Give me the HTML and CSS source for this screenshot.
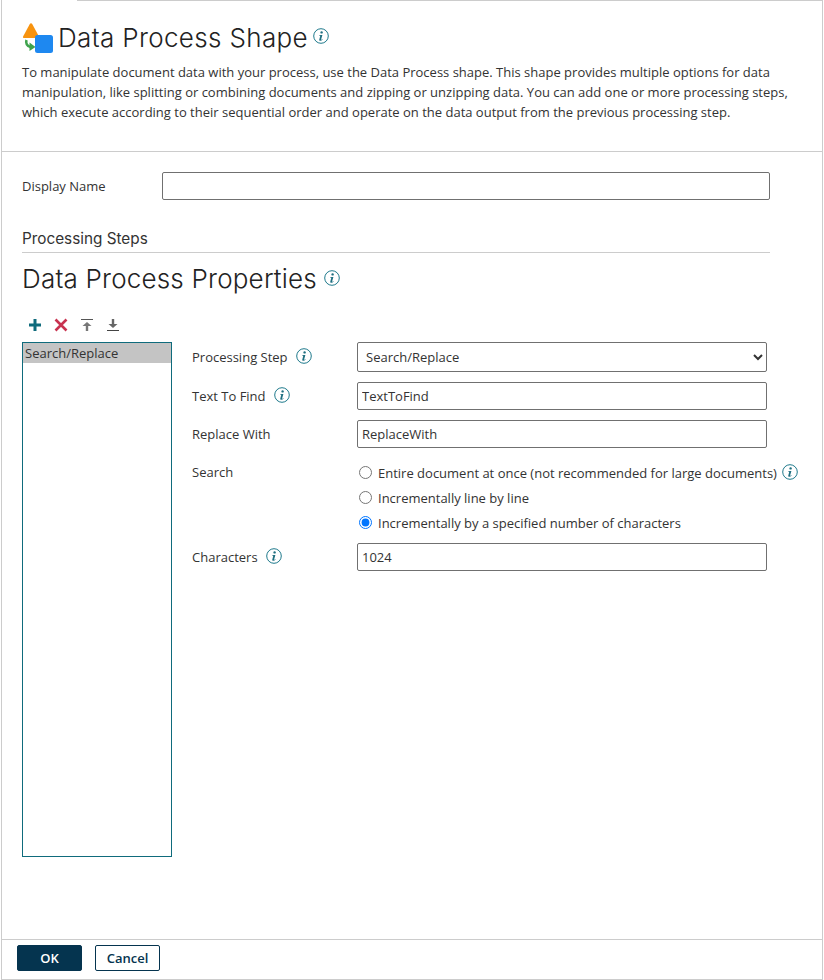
FILE: index.html
```html
<!DOCTYPE html>
<html lang="en">
<head>
    <meta charset="UTF-8">
    <meta name="viewport" content="width=device-width, initial-scale=1.0">
    <title>Data Process Shape</title>
    <link rel="stylesheet" href="styles.css">
</head>
<body>
    <svg class="icon-defs" width="0" height="0" aria-hidden="true">
        <symbol id="info" viewBox="0 0 16 16">
            <circle cx="8" cy="8" r="7.3" fill="none" stroke="#1f7a8c" stroke-width="1"/>
            <circle cx="8.6" cy="4.4" r="1.2" fill="#1f6f80"/>
            <path d="M6.4 7h3l-1.3 4.4c-.1.4.2.5.5.3l.8-.6.2.4c-.7.8-1.5 1.2-2.3 1.2-.8 0-1.2-.5-1-1.3l1-3.6h-1z" fill="#1f6f80"/>
        </symbol>
    </svg>

    <div id="dialog">
        <div class="top-line"></div>

        <div id="intro">
            <div class="title-row">
                <svg class="shape-logo" width="32" height="32" viewBox="0 0 32 32">
                    <path d="M9 1.200c.5 0 .9.300 1.200.800L17 14.500c.4.800 0 1.500-.9 1.500H2c-.9 0-1.300-.7-.9-1.500L7.800 2c.3-.5.700-.8 1.200-.8z" fill="#f7930f"/>
                    <path d="M4.500 18c-1 3 .4 6.300 4 7" fill="none" stroke="#3fa34d" stroke-width="2.600"/>
                    <path d="M7.500 20.500l6 4.500-6 4z" fill="#3fa34d"/>
                    <rect x="13" y="13" width="18" height="18" rx="2.500" fill="#1e88f0"/>
                </svg>
                <h1>Data Process Shape</h1>
                <svg class="info info-title"><use href="#info"/></svg>
            </div>
            <p>To manipulate document data with your process, use the Data Process shape. This shape provides multiple options for data manipulation, like splitting or combining documents and zipping or unzipping data. You can add one or more processing steps, which execute according to their sequential order and operate on the data output from the previous processing step.</p>
        </div>

        <div id="content">
            <div class="name-row">
                <label for="display-name">Display Name</label>
                <input type="text" id="display-name">
            </div>

            <h3>Processing Steps</h3>

            <div class="props-title">
                <h2>Data Process Properties</h2>
                <svg class="info info-title"><use href="#info"/></svg>
            </div>

            <div class="toolbar">
                <svg width="14" height="14" viewBox="0 0 14 14"><path d="M7 1v12M1 7h12" stroke="#0f6b7c" stroke-width="3"/></svg>
                <svg width="14" height="14" viewBox="0 0 14 14"><path d="M1.500 1.500l11 11M12.500 1.500l-11 11" stroke="#c8324f" stroke-width="2.600"/></svg>
                <svg width="14" height="12" viewBox="-1 0 14 12"><path d="M0 .5h12" stroke="#555" stroke-width="1"/><path d="M6 3l4.500 4H7.200v5H4.800V7H1.500z" fill="#777"/></svg>
                <svg width="14" height="12" viewBox="-1 0 14 12"><path d="M4.800 0h2.400v5h3.300L6 9 1.500 5h3.300z" fill="#666"/><path d="M0 11.500h12" stroke="#444" stroke-width="1"/></svg>
            </div>

            <div class="steps-area">
                <div id="steps-list">
                    <div class="step selected">Search/Replace</div>
                </div>

                <div id="step-form">
                    <div class="field field-first">
                        <label>Processing Step <svg class="info"><use href="#info"/></svg></label>
                        <select>
                            <option>Search/Replace</option>
                        </select>
                    </div>
                    <div class="field">
                        <label>Text To Find <svg class="info"><use href="#info"/></svg></label>
                        <input type="text" value="TextToFind">
                    </div>
                    <div class="field">
                        <label>Replace With</label>
                        <input type="text" value="ReplaceWith">
                    </div>
                    <div class="field field-radios">
                        <label>Search</label>
                        <div class="radios">
                            <div class="radio"><input type="radio" name="search"> Entire document at once (not recommended for large documents) <svg class="info"><use href="#info"/></svg></div>
                            <div class="radio"><input type="radio" name="search"> Incrementally line by line</div>
                            <div class="radio"><input type="radio" name="search" checked> Incrementally by a specified number of characters</div>
                        </div>
                    </div>
                    <div class="field">
                        <label>Characters <svg class="info"><use href="#info"/></svg></label>
                        <input type="text" value="1024">
                    </div>
                </div>
            </div>
        </div>

        <div id="footer">
            <button class="btn-ok">OK</button>
            <button class="btn-cancel">Cancel</button>
        </div>
    </div>
</body>
</html>
```

FILE: styles.css
```css
html, body {
    height: 100%;
}
body {
    font-family: "Open Sans", "Noto Sans", sans-serif;
    font-size: 13px;
    color: #333;
    margin: 0;
    padding: 0;
    background-color: #fff;
}
.icon-defs {
    display: block;
    height: 0;
}
#dialog {
    box-sizing: border-box;
    height: 980px;
    margin: 0 1px;
    border-left: 1px solid #ccc;
    border-right: 1px solid #ccc;
    border-bottom: 1px solid #ccc;
    display: flex;
    flex-direction: column;
}
.top-line {
    height: 1px;
    margin-left: 75px;
    background-color: #ccc;
}


#intro {
    height: 151px;
    box-sizing: border-box;
    border-bottom: 1px solid #ccc;
    padding: 18px 20px 0;
}
.title-row {
    display: flex;
    align-items: center;
    height: 36px;
}
.shape-logo {
    margin-right: 4px;
    margin-top: 2px;
}
h1, h2 {
    font-family: Inter, "Open Sans", sans-serif;
    font-weight: 300;
    color: #222;
    margin: 0;
}
h1 {
    font-size: 26px;
    letter-spacing: 0.35px;
}
#intro p {
    margin: 7px 0 0;
    line-height: 20px;
    font-size: 13px;
    color: #333;
}
.info {
    width: 16px;
    height: 16px;
    vertical-align: -2px;
    margin-left: 5px;
}
.info-title {
    align-self: flex-start;
    margin-top: 9px;
}


#content {
    flex: 1;
    padding: 20px 20px 0;
    min-height: 0;
}
.name-row {
    display: flex;
    align-items: center;
}
.name-row label {
    width: 140px;
}
.name-row input {
    width: 608px;
    height: 28px;
}
input[type="text"], select {
    box-sizing: border-box;
    border: 1px solid #707070;
    border-radius: 2px;
    font-family: inherit;
    font-size: 13px;
    color: #333;
    padding: 0 4px;
    margin: 0;
    background-color: #fff;
}
h3 {
    font-family: Inter, "Open Sans", sans-serif;
    font-weight: 400;
    font-size: 15.300px;
    color: #333;
    margin: 29px 0 0;
    width: 748px;
    height: 23px;
    line-height: 20px;
    border-bottom: 1px solid #ccc;
}
.props-title {
    display: flex;
    align-items: center;
    height: 36px;
    margin-top: 7px;
}
.props-title .info-title {
    margin-top: 10px;
    margin-left: 7px;
}
h2 {
    font-size: 26px;
    letter-spacing: 0.2px;
}


.toolbar {
    display: flex;
    align-items: center;
    gap: 12px;
    height: 20px;
    margin-top: 19px;
    padding-left: 6px;
}
.steps-area {
    display: flex;
    margin-top: 7px;
}
#steps-list {
    box-sizing: border-box;
    width: 150px;
    height: 515px;
    border: 1px solid #0f6b7c;
    flex-shrink: 0;
}
.step {
    height: 20px;
    line-height: 20px;
    padding-left: 2px;
}
.step.selected {
    background-color: #c4c4c4;
}


#step-form {
    margin-left: 20px;
    width: 612px;
}
.field {
    display: flex;
    align-items: center;
    height: 28px;
    margin-bottom: 10px;
}
.field-first {
    height: 30px;
}
.field label {
    width: 165px;
    flex-shrink: 0;
}
.field input[type="text"], .field select {
    width: 410px;
    height: 28px;
}
.field select {
    height: 30px;
    padding-left: 4px;
}
.field-radios {
    height: auto;
    align-items: flex-start;
    margin-top: 12px;
    margin-bottom: 8px;
}
.field-radios label {
    margin-top: 3px;
}
.radio {
    display: flex;
    align-items: center;
    height: 25px;
    white-space: nowrap;
}
.radio input {
    width: 13px;
    height: 13px;
    margin: 0 6px 0 2px;
}
.radio .info {
    margin-bottom: 2px;
}


#footer {
    height: 40px;
    box-sizing: border-box;
    border-top: 1px solid #ccc;
    padding: 5px 15px 0;
    display: flex;
    gap: 13px;
}
#footer button {
    box-sizing: border-box;
    width: 65px;
    height: 26px;
    border-radius: 2px;
    font-family: inherit;
    font-size: 13px;
    font-weight: 600;
    padding: 0;
    border: 1px solid #05344f;
}
.btn-ok {
    background-color: #05344f;
    color: #fff;
}
.btn-cancel {
    background-color: #fff;
    color: #05344f;
}
```
